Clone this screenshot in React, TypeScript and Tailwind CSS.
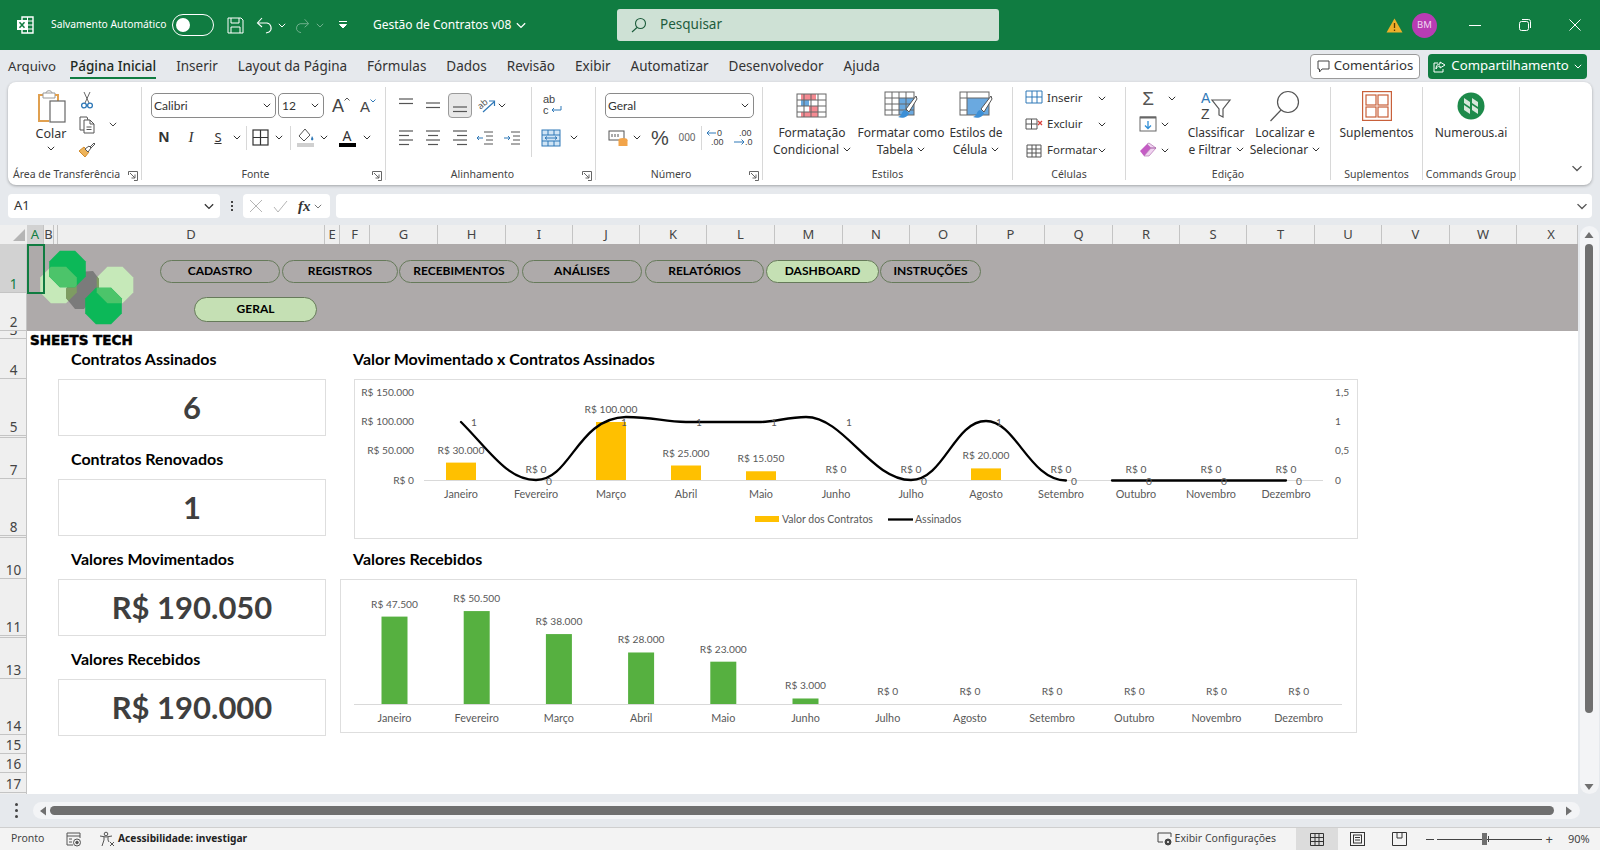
import React from "react";

const Chev = ({ className = "" }: { className?: string }) => (
  <svg width="8" height="5" viewBox="0 0 8 5" className={`shrink-0 ${className}`}>
    <path d="M.8.8 4 4 7.2.8" fill="none" stroke="currentColor" strokeWidth="1" />
  </svg>
);

const Launcher = () => (
  <svg width="10" height="10" viewBox="0 0 10 10" className="absolute right-[3px] top-[6px] text-[#666]">
    <path d="M.5 4V.5H9.5V9.5H6" fill="none" stroke="currentColor" />
    <path d="M2 2l5 5M7 3.5V7H3.5" fill="none" stroke="currentColor" />
  </svg>
);

function Group({ w, label, launcher, children, noBorder }: { w: string; label: string; launcher?: boolean; children: React.ReactNode; noBorder?: boolean }) {
  return (
    <div className={`${w} shrink-0 flex flex-col h-[93px] ${noBorder ? "" : "border-r border-[#d8d8d8]"}`}>
      <div className="h-[78px] flex">{children}</div>
      <div className={`relative h-[15px] pt-[2px] text-center text-[10.5px] leading-[15px] text-[#444] whitespace-nowrap ${launcher ? "pr-[16px]" : ""}`}>
        {label}
        {launcher && <Launcher />}
      </div>
    </div>
  );
}

const Combo = ({ w, text, className = "" }: { w: string; text: string; className?: string }) => (
  <div className={`${w} h-[25px] shrink-0 flex items-center justify-between pl-[2px] pr-[4px] border border-[#8a8a8a] rounded-[5px] font-['Lato',sans-serif] text-[12px] text-[#333] ${className}`}>
    <span>{text}</span>
    <Chev />
  </div>
);

const BigBtn = ({ w, icon, lines, chev }: { w: string; icon: React.ReactNode; lines: string[]; chev?: boolean }) => (
  <div className={`${w} shrink-0 flex flex-col items-center`}>
    <div className="h-[32px] mt-[3px] flex items-center justify-center">{icon}</div>
    <div className="mt-[2px] text-[12px] leading-[17px] text-center text-[#333] whitespace-nowrap">
      <div>{lines[0]}</div>
      {lines[1] && (
        <div className="flex items-center justify-center gap-[4px]">
          {lines[1]}
          {chev && <Chev />}
        </div>
      )}
    </div>
  </div>
);

const Lines = ({ rows, y = 0 }: { rows: [number, number][]; y?: number }) => (
  <svg width="20" height="20" viewBox="0 0 20 20">
    {rows.map(([a, b], i) => (
      <path key={i} d={`M${a} ${y + 4 + i * 4.5}H${b}`} stroke="#555" strokeWidth="1.2" />
    ))}
  </svg>
);

const Grid = ({ color = "#666" }: { color?: string }) => (
  <g stroke={color} strokeWidth="1" fill="none">
    <rect x="1" y="1" width="29" height="23" />
    <path d="M8 1v23M15 1v23M22 1v23M1 7h29M1 13h29M1 19h29" />
  </g>
);

const CondIcon = () => (
  <svg width="32" height="26" viewBox="0 0 32 26">
    <rect x="5" y="1" width="15" height="6" fill="#f58a92" />
    <rect x="5" y="7" width="8" height="6" fill="#6aa9e0" />
    <rect x="13" y="13" width="9" height="6" fill="#f58a92" />
    <rect x="5" y="19" width="17" height="5" fill="#f58a92" />
    <Grid />
  </svg>
);

const TableIcon = ({ full }: { full?: boolean }) => (
  <svg width="34" height="30" viewBox="0 0 34 30">
    <rect x={full ? 8 : 15} y="7" width={full ? 22 : 15} height={17} fill="#6aa9e0" />
    <g stroke="#666" fill="none">
      <rect x="1" y="1" width="29" height="23" />
      {full ? <path d="M8 1v23M1 7h29M1 19h7" /> : <path d="M8 1v23M15 1v23M22 1v23M1 7h29M1 13h29M1 19h29" />}
    </g>
    <path d="M32 5 22 18l3 3L33 8Z" fill="#fff" stroke="#555" />
    <path d="M21 19c-4 1-2 5-7 7 5 2 10 0 11-4Z" fill="#3c8fd6" />
  </svg>
);

const FontSizeBtn = ({ size, up }: { size: string; up: boolean }) => (
  <span className={`relative ${size} leading-none text-[#444] font-['Liberation_Sans',sans-serif]`}>
    A
    <svg width="6" height="4" viewBox="0 0 6 4" className="absolute -right-[6px] top-[1px]" fill="none" stroke={up ? "#555" : "#2f78b7"}>
      <path d={up ? "M.5 3.500 3 1l2.500 2.500" : "M.5.5 3 3 5.500.5"} />
    </svg>
  </span>
);

function Ribbon() {
  return (
    <div className="mx-2 h-[103px] bg-white rounded-[8px] shadow-[0_1px_3px_rgba(0,0,0,0.3)] flex py-[5px] text-[#333]">
      <Group w="w-[134px]" label="Área de Transferência" launcher>
        <div className="ml-[21px] w-[44px] flex flex-col items-center">
          <svg width="30" height="34" viewBox="0 0 30 34" className="mt-[3px] ml-[2px]">
            <path d="M11 5H2v26h10" fill="#fff" stroke="#e0a050" strokeWidth="2" />
            <path d="M6 3h12v5H6z" fill="#fff" stroke="#999" />
            <path d="M9 3c0-3 6-3 6 0" fill="none" stroke="#999" />
            <path d="M18 5h3v6" fill="none" stroke="#e0a050" strokeWidth="2" />
            <rect x="13" y="11" width="15" height="21" fill="#fff" stroke="#666" strokeWidth="1.2" />
          </svg>
          <span className="mt-[2px] text-[12.5px] leading-[16px]">Colar</span>
          <Chev className="mt-[4px]" />
        </div>
        <div className="ml-[4px] flex flex-col">
          <div className="h-[25px] w-5 flex items-center justify-center">
            <svg width="14" height="18" viewBox="0 0 14 18" fill="none">
              <path d="M4 1l5 11M10 1 5 12" stroke="#666" />
              <circle cx="4" cy="14.5" r="2.4" stroke="#2f78b7" strokeWidth="1.3" />
              <circle cx="10" cy="14.5" r="2.4" stroke="#2f78b7" strokeWidth="1.3" />
            </svg>
          </div>
          <div className="h-[25px] flex items-center">
            <div className="w-5 flex justify-center">
              <svg width="16" height="18" viewBox="0 0 16 18" fill="none" stroke="#555">
                <path d="M5 14H1V1h7l1 3" />
                <path d="M5 4h6l4 4v9H5zM11 4v4h4M7.5 11h5M7.5 13.5h5" />
              </svg>
            </div>
            <Chev className="ml-[12px] text-[#444]" />
          </div>
          <div className="h-[25px] w-5 flex items-center justify-center">
            <svg width="18" height="18" viewBox="0 0 18 18">
              <path d="M1 10l6 6 4-5-5-5Z" fill="#eeb45a" stroke="#d18a2b" />
              <path d="M7 8l4-3 2 2-3 4Z" fill="#fff" stroke="#555" />
              <path d="M12 6l4-4 1 1-4 4Z" fill="#fff" stroke="#555" />
            </svg>
          </div>
        </div>
      </Group>

      <Group w="w-[244px]" label="Fonte" launcher>
        <div className="flex flex-col">
          <div className="mt-[6px] flex items-center">
            <Combo w="w-[125px]" text="Calibri" className="ml-[9px]" />
            <Combo w="w-[46px]" text="12" className="ml-[2px] !pl-[3px]" />
            <span className="ml-[8px]"><FontSizeBtn up size="text-[18px]" /></span>
            <span className="ml-[16px]"><FontSizeBtn up={false} size="text-[15px]" /></span>
          </div>
          <div className="mt-[7px] h-[25px] flex items-center text-[#333]">
            <span className="ml-[12px] w-5 text-center font-['Liberation_Sans',sans-serif] font-bold text-[15px]">N</span>
            <span className="ml-[7px] w-5 text-center font-['Liberation_Serif',serif] italic text-[15px]">I</span>
            <span className="ml-[7px] w-5 text-center underline text-[13px]">S</span>
            <Chev className="ml-[5px]" />
            <span className="ml-[5px] w-px h-[24px] bg-[#d8d8d8]" />
            <svg width="17" height="17" viewBox="0 0 17 17" className="ml-[5px]" fill="none" stroke="#333" strokeWidth="1.2">
              <rect x="1" y="1" width="15" height="15" />
              <path d="M8.5 1v15M1 8.5h15" />
            </svg>
            <Chev className="ml-[6px]" />
            <span className="ml-[7px] w-px h-[24px] bg-[#d8d8d8]" />
            <svg width="18" height="20" viewBox="0 0 18 20" className="ml-[6px]">
              <path d="M8 1 2 8l5 5 6-6Z" fill="#fff" stroke="#555" />
              <path d="M15 8c1 2 2 3 1 4s-2 0-2-1Z" fill="#2f78b7" />
              <rect x="0" y="15" width="17" height="4" fill="#d0d0d0" />
            </svg>
            <Chev className="ml-[5px]" />
            <span className="ml-[10px] w-[18px] flex flex-col items-center leading-none">
              <span className="text-[14px] leading-[15px]">A</span>
              <span className="w-[17px] h-[4px] bg-black" />
            </span>
            <Chev className="ml-[7px]" />
          </div>
        </div>
      </Group>

      <Group w="w-[210px]" label="Alinhamento" launcher>
        <div className="w-[146px] shrink-0 flex flex-col border-r border-[#d8d8d8] mb-[8px]">
          <div className="mt-[6px] h-[25px] flex items-center">
            <span className="ml-[10px]"><Lines rows={[[3, 17], [3, 17]]} y={-1} /></span>
            <span className="ml-[7px]"><Lines rows={[[3, 17], [3, 17]]} y={3} /></span>
            <span className="ml-[5px] w-[24px] h-[25px] flex items-center justify-center bg-[#e8e8e8] border border-[#9a9a9a] rounded-[4px]"><Lines rows={[[3, 17], [3, 17]]} y={7} /></span>
            <svg width="20" height="20" viewBox="0 0 20 20" className="ml-[5px]" fill="none">
              <text x="1" y="11" fontSize="9" fill="#555" transform="rotate(-40 6 9)">ab</text>
              <path d="M6 16 17 6M12 5h5.5V10" stroke="#2f78b7" strokeWidth="1.2" />
            </svg>
            <Chev className="ml-[1px]" />
          </div>
          <div className="mt-[7px] h-[25px] flex items-center">
            <span className="ml-[10px]"><Lines rows={[[3, 17], [3, 13], [3, 17], [3, 13]]} y={-1} /></span>
            <span className="ml-[7px]"><Lines rows={[[3, 17], [5, 15], [3, 17], [5, 15]]} y={-1} /></span>
            <span className="ml-[7px]"><Lines rows={[[3, 17], [7, 17], [3, 17], [7, 17]]} y={-1} /></span>
            <svg width="20" height="20" viewBox="0 0 20 20" className="ml-[5px]" fill="none" stroke="#555">
              <path d="M9 4h9M11 8h7M11 12h7M9 16h9" /><path d="M8 10H2M4 8l-2 2 2 2" stroke="#2f78b7" />
            </svg>
            <svg width="20" height="20" viewBox="0 0 20 20" className="ml-[7px]" fill="none" stroke="#555">
              <path d="M9 4h9M11 8h7M11 12h7M9 16h9" /><path d="M2 10h6M6 8l2 2-2 2" stroke="#2f78b7" />
            </svg>
          </div>
        </div>
        <div className="flex flex-col">
          <div className="mt-[6px] h-[25px] flex items-center ml-[11px]">
            <span className="relative w-[20px] h-[24px] leading-[11px] text-[#444] text-[11px] font-['Liberation_Sans',sans-serif]">
              ab
              <br />c
              <svg width="13" height="10" viewBox="0 0 13 10" className="absolute left-[7px] top-[11px]" fill="none" stroke="#2f78b7"><path d="M11 1v4H2M4 3 2 5l2 2" /></svg>
            </span>
          </div>
          <div className="mt-[7px] h-[25px] flex items-center ml-[9px]">
            <svg width="20" height="18" viewBox="0 0 20 18" fill="#cfe4f5" stroke="#2f78b7">
              <rect x="1" y="1" width="18" height="16" />
              <path d="M1 6h18M1 12h18M7 1v5M13 1v5M7 12v5M13 12v5" fill="none" />
              <path d="M4 9h12M6 7.5 4 9l2 1.5M14 7.5 16 9l-2 1.5" fill="none" />
            </svg>
            <Chev className="ml-[9px]" />
          </div>
        </div>
      </Group>

      <Group w="w-[167px]" label="Número" launcher>
        <div className="flex flex-col">
          <Combo w="w-[149px]" text="Geral" className="ml-[9px] mt-[6px]" />
          <div className="mt-[7px] h-[25px] flex items-center">
            <svg width="20" height="18" viewBox="0 0 20 18" className="ml-[12px]">
              <rect x="1" y="2" width="15" height="9" fill="#fff" stroke="#555" />
              <path d="M4 5v3M7 5v3M10 5v3" stroke="#555" />
              <ellipse cx="15" cy="11" rx="4.5" ry="2" fill="#f2a44a" />
              <rect x="10.5" y="11" width="9" height="6" fill="#f2a44a" />
            </svg>
            <Chev className="ml-[5px]" />
            <span className="ml-[8px] w-[22px] text-center text-[20px] leading-none font-['Liberation_Sans',sans-serif] font-light text-[#444]">%</span>
            <span className="ml-[6px] w-[20px] text-center text-[10px] text-[#666]">000</span>
            <span className="ml-[4px] w-px h-[24px] bg-[#d8d8d8]" />
            <svg width="22" height="20" viewBox="0 0 22 20" className="ml-[3px] font-['Liberation_Sans',sans-serif]" fontSize="9">
              <text x="12" y="8" fill="#444">0</text><text x="6" y="17" fill="#444">.00</text>
              <path d="M11 5H2M4.5 2.5 2 5l2.5 2.5" fill="none" stroke="#2f78b7" />
            </svg>
            <svg width="22" height="20" viewBox="0 0 22 20" className="ml-[5px] font-['Liberation_Sans',sans-serif]" fontSize="9">
              <text x="7" y="8" fill="#444">.00</text><text x="13" y="17" fill="#444">.0</text>
              <path d="M2 14h10M9.5 11.500 12 14l-2.500 2.500" fill="none" stroke="#2f78b7" />
            </svg>
          </div>
        </div>
      </Group>

      <Group w="w-[250px]" label="Estilos">
        <div className="w-[5px]" />
        <BigBtn w="w-[88px]" icon={<CondIcon />} lines={["Formatação", "Condicional"]} chev />
        <BigBtn w="w-[90px]" icon={<TableIcon />} lines={["Formatar como", "Tabela"]} chev />
        <BigBtn w="w-[60px]" icon={<TableIcon full />} lines={["Estilos de", "Célula"]} chev />
      </Group>

      <Group w="w-[113px]" label="Células">
        <div className="w-full flex flex-col -mt-[2px] text-[11.5px]">
          {[
            ["Inserir", "M1 1h16v12H1zM7 1v12M12 1v12M1 7h16"],
            ["Excluir", "M1 3h11v10H1zM6.500 3v10M1 8h11"],
            ["Formatar", "M2 3h14v12H2zM7 3v12M11 3v12M2 7h14M2 11h14"],
          ].map(([t, d], i) => (
            <div key={t} className="h-[26px] flex items-center">
              <svg width="18" height="16" viewBox="0 0 18 16" className="ml-[12px] shrink-0" fill="none">
                <path d={d} stroke={i === 0 ? "#2f78b7" : "#555"} />
                {i === 1 && <path d="M13 5l4 4M17 5l-4 4" stroke="#d9403a" strokeWidth="1.300" />}
              </svg>
              <span className="ml-[4px]">{t}</span>
              <Chev className="ml-auto mr-[19px]" />
            </div>
          ))}
        </div>
      </Group>

      <Group w="w-[205px]" label="Edição">
        <div className="w-[60px] shrink-0 flex flex-col -mt-[2px]">
          <div className="h-[26px] flex items-center">
            <span className="ml-[13px] w-[18px] text-center text-[19px] leading-none font-['Liberation_Sans',sans-serif] text-[#555]">Σ</span>
            <Chev className="ml-[11px]" />
          </div>
          <div className="h-[26px] flex items-center">
            <svg width="18" height="16" viewBox="0 0 18 16" className="ml-[13px]" fill="none">
              <rect x="1" y="1" width="16" height="14" stroke="#666" />
              <path d="M1 1.500h16" stroke="#666" strokeWidth="2" />
              <path d="M9 5v7M6 9.500 9 12.500l3-3" stroke="#2f8ed6" strokeWidth="1.300" />
            </svg>
            <Chev className="ml-[4px]" />
          </div>
          <div className="h-[26px] flex items-center">
            <svg width="18" height="16" viewBox="0 0 18 16" className="ml-[13px]">
              <path d="M1 9 8 2l4 4-7 8Z" fill="#c45cc4" />
              <path d="M8 2l2-1 7 5-5 0Z M12 6l5 0-7 8-5 0Z" fill="#f0d4f0" stroke="#a55aa5" strokeWidth=".6" />
            </svg>
            <Chev className="ml-[4px]" />
          </div>
        </div>
        <BigBtn
          w="w-[60px]"
          icon={
            <svg width="32" height="30" viewBox="0 0 32 30" fill="none">
              <text x="1" y="12" fontSize="14" fill="#2f78b7" className="font-['Liberation_Sans',sans-serif]">A</text>
              <text x="1" y="28" fontSize="14" fill="#444" className="font-['Liberation_Sans',sans-serif]">Z</text>
              <path d="M12 9h18l-7 9v8l-4-2v-6Z" stroke="#555" strokeWidth="1.200" />
            </svg>
          }
          lines={["Classificar", "e Filtrar"]}
          chev
        />
        <BigBtn
          w="w-[78px]"
          icon={
            <svg width="32" height="32" viewBox="0 0 32 32" fill="none" stroke="#555" strokeWidth="1.200">
              <circle cx="19" cy="12" r="10.500" />
              <path d="M12 20 1.500 31" />
            </svg>
          }
          lines={["Localizar e", "Selecionar"]}
          chev
        />
      </Group>

      <Group w="w-[92px]" label="Suplementos">
        <BigBtn
          w="w-full"
          icon={
            <svg width="30" height="30" viewBox="0 0 30 30" fill="#fff" stroke="#c8603a" strokeWidth="1.200">
              <rect x=".6" y=".6" width="28.800" height="28.800" />
              <rect x="4" y="4" width="10" height="10" />
              <rect x="16" y="4" width="10" height="10" />
              <rect x="4" y="16" width="10" height="10" />
              <rect x="16" y="16" width="10" height="10" />
            </svg>
          }
          lines={["Suplementos"]}
        />
      </Group>

      <Group w="w-[97px]" label="Commands Group">
        <BigBtn
          w="w-full"
          icon={
            <svg width="28" height="28" viewBox="0 0 28 28">
              <circle cx="14" cy="14" r="13.500" fill="#1d8a4a" />
              <path d="M7 6l6 4v5L7 11ZM7 13l6 4v5l-6-4ZM15 6l6 4v5l-6-4ZM15 13l6 4v5l-6-4Z" fill="#d8e8dc" />
            </svg>
          }
          lines={["Numerous.ai"]}
        />
      </Group>

      <div className="flex-1 relative">
        <Chev className="absolute left-[53px] top-[79px] scale-[1.400] text-[#555]" />
      </div>
    </div>
  );
}

function TitleBar() {
  return (
    <div className="h-[50px] shrink-0 bg-[#107c41] text-white flex items-center">
      <div className="w-[617px] shrink-0 flex items-center">
        <svg width="18" height="18" viewBox="0 0 18 18" className="ml-[16px]">
          <path d="M6 1h11v16H6z" fill="none" stroke="#fff" strokeWidth="1.400" />
          <path d="M11.500 1v16M6 5h11M6 9h11M6 13h11" stroke="#fff" />
          <rect x="1" y="4" width="10" height="10" fill="#fff" />
          <path d="M3.500 6.200 8.500 11.800M8.500 6.200 3.500 11.800" stroke="#107c41" strokeWidth="1.500" />
        </svg>
        <span className="ml-[17px] text-[10.3px] whitespace-nowrap w-[104px]">Salvamento Automático</span>
        <div className="ml-[17px] w-[42px] h-[22px] rounded-full border border-white flex items-center pl-[3px]">
          <span className="w-[14px] h-[14px] rounded-full bg-white" />
        </div>
        <svg width="17" height="17" viewBox="0 0 17 17" className="ml-[13px]" fill="none" stroke="#fff">
          <path d="M1 1h13l2 2v13H1z" /><path d="M4 1v5h8V1M4 16v-6h9v6" />
        </svg>
        <svg width="19" height="18" viewBox="0 0 19 18" className="ml-[12px]" fill="none" stroke="#fff" strokeWidth="1.100">
          <path d="M2 7h9a5 5 0 0 1 2 9l-3 1" /><path d="M6 2 1.500 7 6 11" />
        </svg>
        <Chev className="ml-[3px]" />
        <svg width="17" height="17" viewBox="0 0 19 18" className="ml-[7px] opacity-40" fill="none" stroke="#fff" strokeWidth="1.100">
          <path d="M17 7H8a5 5 0 0 0-2 9l3 1" /><path d="M13 2l4.500 5L13 11" />
        </svg>
        <Chev className="ml-[6px] opacity-40" />
        <svg width="10" height="10" viewBox="0 0 10 10" className="ml-[14px]" fill="none" stroke="#fff">
          <path d="M1 1.500h8" /><path d="M1.500 4.500 5 8l3.500-3.500Z" fill="#fff" />
        </svg>
        <span className="ml-[25px] text-[12px] whitespace-nowrap">Gestão de Contratos v08</span>
        <Chev className="ml-[6px] scale-[1.300]" />
      </div>
      <div className="w-[382px] h-[32px] shrink-0 rounded-[3px] bg-[#cee1d5] flex items-center text-[#1d5c3c]">
        <svg width="16" height="16" viewBox="0 0 16 16" className="ml-[14px]" fill="none" stroke="#1d5c3c" strokeWidth="1.100">
          <circle cx="9.500" cy="6.500" r="5" /><path d="M6 10.500 1 15" />
        </svg>
        <span className="ml-[13px] text-[13.5px] -mt-[1px]">Pesquisar</span>
      </div>
      <div className="flex-1 flex items-center">
        <svg width="17" height="15" viewBox="0 0 17 15" className="ml-[387px]">
          <path d="M8.500.5 16.500 14.500H.5Z" fill="#eeb02a" />
          <path d="M8.500 5v5M8.500 11.500v1.500" stroke="#5a3a00" strokeWidth="1.300" />
        </svg>
        <span className="ml-[9px] w-[25px] h-[25px] rounded-full bg-[#b83cb3] flex items-center justify-center text-[9.5px] text-[#f0d8f0]">BM</span>
        <span className="ml-[32px] w-[12px] h-px bg-white" />
        <svg width="12" height="12" viewBox="0 0 12 12" className="ml-[38px]" fill="none" stroke="#fff">
          <rect x=".5" y="2.500" width="9" height="9" rx="2" /><path d="M3 .5h6.500a2 2 0 0 1 2 2V9" />
        </svg>
        <svg width="12" height="12" viewBox="0 0 12 12" className="ml-[38px]" fill="none" stroke="#fff">
          <path d="M.5.5l11 11M11.500.5l-11 11" />
        </svg>
      </div>
    </div>
  );
}

function TabRow() {
  const tabs = ["Página Inicial", "Inserir", "Layout da Página", "Fórmulas", "Dados", "Revisão", "Exibir", "Automatizar", "Desenvolvedor", "Ajuda"];
  return (
    <div className="h-[32px] shrink-0 flex items-center pl-[8px] text-[13.2px] text-[#333]">
      <div className="flex flex-1 h-full text-[13.5px]">
        <div className="w-[62px] flex items-center pt-[1px] text-[13.2px]">Arquivo</div>
        <div className="flex gap-[20px]">
          {tabs.map((t) => (
            <div key={t} className={`relative flex items-center pt-[1px] whitespace-nowrap ${t === "Página Inicial" ? "font-medium text-[#1d2b24]" : ""}`}>
              {t}
              {t === "Página Inicial" && <span className="absolute left-0 right-0 bottom-[3px] h-[2px] bg-[#107c41]" />}
            </div>
          ))}
        </div>
      </div>
      <div className="w-[110px] h-[25px] flex items-center justify-center gap-[4px] bg-white border border-[#9a9a9a] rounded-[4px]">
        <svg width="13" height="13" viewBox="0 0 13 13" fill="none" stroke="#444"><path d="M1 1h11v8H5L2.500 12V9H1z" /></svg>
        Comentários
      </div>
      <div className="ml-[8px] mr-[13px] w-[159px] h-[25px] flex items-center justify-center gap-[5px] bg-[#107c41] text-white rounded-[4px]">
        <svg width="13" height="13" viewBox="0 0 13 13" fill="none" stroke="#fff"><path d="M5 3H1v9h9V9M7 2l5 3-5 3V6C5 6 4 7 3 9c0-3 1-5 4-5Z" /></svg>
        <span className="whitespace-nowrap">Compartilhamento</span>
        <Chev />
      </div>
    </div>
  );
}

function FormulaBar() {
  return (
    <div className="mt-[9px] mx-2 h-[24px] shrink-0 flex items-center text-[#333]">
      <div className="w-[212px] h-full bg-white rounded-[4px] flex items-center justify-between pl-[6px] pr-[7px] text-[13px]">
        A1
        <Chev className="scale-[1.300]" />
      </div>
      <div className="w-[23px] flex flex-col items-center gap-[2px]">
        <span className="w-[2px] h-[2px] bg-[#444]" /><span className="w-[2px] h-[2px] bg-[#444]" /><span className="w-[2px] h-[2px] bg-[#444]" />
      </div>
      <div className="w-[87px] h-full bg-white rounded-[4px] flex items-center">
        <svg width="14" height="14" viewBox="0 0 14 14" className="ml-[6px]" stroke="#b5b5b5" fill="none"><path d="M1 1l12 12M13 1 1 13" /></svg>
        <svg width="15" height="13" viewBox="0 0 15 13" className="ml-[10px]" stroke="#b5b5b5" fill="none"><path d="M1 7l4 5L14 1" /></svg>
        <span className="ml-[10px] font-['Liberation_Serif',serif] italic font-semibold text-[15px] text-[#333]">fx</span>
        <Chev className="ml-[3px] text-[#777]" />
      </div>
      <div className="ml-[6px] flex-1 h-full bg-white rounded-[4px] flex items-center justify-end pr-[6px]">
        <Chev className="scale-[1.400] text-[#555]" />
      </div>
    </div>
  );
}

const cols: [string, string][] = [
  ["A", "w-[17px]"], ["B", "w-[10px]"], ["", "w-[4px]"], ["D", "w-[267px]"], ["E", "w-[15px]"], ["F", "w-[30px]"],
  ["G", "w-[68px]"], ["H", "w-[68px]"], ["I", "w-[67px]"], ["J", "w-[67px]"], ["K", "w-[67px]"], ["L", "w-[68px]"],
  ["M", "w-[68px]"], ["N", "w-[67px]"], ["O", "w-[67px]"], ["P", "w-[68px]"], ["Q", "w-[68px]"], ["R", "w-[67px]"],
  ["S", "w-[67px]"], ["T", "w-[68px]"], ["U", "w-[67px]"], ["V", "w-[68px]"], ["W", "w-[67px]"], ["X", "flex-1 pl-[8px]"],
];
const rows: [string, string][] = [
  ["1", "h-[49px]"], ["2", "h-[38px]"], ["3", "h-[8px]"], ["4", "h-[40px]"], ["5", "h-[57px]"], ["", "h-[2px]"],
  ["7", "h-[41px]"], ["8", "h-[57px]"], ["", "h-[2px]"], ["10", "h-[41px]"], ["11", "h-[57px]"], ["", "h-[2px]"],
  ["13", "h-[41px]"], ["14", "h-[56px]"], ["15", "h-[19px]"], ["16", "h-[19px]"], ["17", "h-[20px]"],
];

const octagon = (cx: number, cy: number, r = 19.800) =>
  Array.from({ length: 8 }, (_, i) => {
    const a = ((i + 0.5) * Math.PI) / 4;
    return `${(cx + r * Math.cos(a)).toFixed(1)},${(cy + r * Math.sin(a)).toFixed(1)}`;
  }).join(" ");

function Logo() {
  const d1 = octagon(67.5, 269);
  const d2 = octagon(103.5, 306);
  const grey = "78,272 93,271 99,279 99,289 84,309 75,309 66,298 66,289";
  return (
    <svg viewBox="37 244 100 85" className="absolute left-[10px] top-0 w-[100px] h-[85px]">
      <defs>
        <clipPath id="c1"><polygon points={d1} /></clipPath>
        <clipPath id="c2"><polygon points={d2} /></clipPath>
        <clipPath id="c3"><polygon points={grey} /></clipPath>
      </defs>
      <polygon points={octagon(58.5, 285)} fill="#c6e9b9" />
      <polygon points={octagon(115, 285)} fill="#c6e9b9" />
      <polygon points={grey} fill="#7b7b7b" />
      <g clipPath="url(#c3)">
        <polygon points={octagon(58.5, 285)} fill="#7e9c62" />
        <polygon points={octagon(115, 285)} fill="#7e9c62" />
      </g>
      <polygon points={d1} fill="#0cb858" />
      <polygon points={d2} fill="#0cb858" />
      <g clipPath="url(#c1)"><polygon points={octagon(58.5, 285)} fill="#4cc46a" /></g>
      <g clipPath="url(#c2)"><polygon points={octagon(115, 285)} fill="#4cc46a" /></g>
    </svg>
  );
}

const Pill = ({ w, label, active, ml }: { w: string; label: string; active?: boolean; ml: string }) => (
  <div className={`${w} ${ml} shrink-0 flex items-center justify-center pb-[1px] rounded-full border border-[#667a5a] font-['Lato',sans-serif] font-bold text-[12px] text-black ${active ? "bg-[#c5e0b4]" : ""}`}>
    {label}
  </div>
);

function Band() {
  return (
    <div className="h-[87px] bg-[#aeaaaa] pt-[16px]">
      <div className="flex h-[23px] pl-[133px]">
        <Pill w="w-[120px]" ml="ml-0" label="CADASTRO" />
        <Pill w="w-[116px]" ml="ml-[2px]" label="REGISTROS" />
        <Pill w="w-[120px]" ml="ml-[1px]" label="RECEBIMENTOS" />
        <Pill w="w-[120px]" ml="ml-[3px]" label="ANÁLISES" />
        <Pill w="w-[119px]" ml="ml-[3px]" label="RELATÓRIOS" />
        <Pill w="w-[113px]" ml="ml-[2px]" label="DASHBOARD" active />
        <Pill w="w-[101px]" ml="ml-[1px]" label="INSTRUÇÕES" />
      </div>
      <div className="mt-[14px] ml-[167px]">
        <div className="flex h-[25px]">
          <Pill w="w-[123px]" ml="ml-0" label="GERAL" active />
        </div>
      </div>
    </div>
  );
}

const kpis = [
  ["Contratos Assinados", "6"],
  ["Contratos Renovados", "1"],
  ["Valores Movimentados", "R$ 190.050"],
  ["Valores Recebidos", "R$ 190.000"],
];

const months = ["Janeiro", "Fevereiro", "Março", "Abril", "Maio", "Junho", "Julho", "Agosto", "Setembro", "Outubro", "Novembro", "Dezembro"];

function ChartOne() {
  const vals = [30000, 0, 100000, 25000, 15050, 0, 0, 20000, 0, 0, 0, 0];
  const lines = [1, 0, 1, 1, 1, 1, 0, 1, 0, 0, 0, 0];
  const fmt = (v: number) => "R$ " + v.toLocaleString("de-DE");
  const cx = (i: number) => 461 + i * 75;
  return (
    <svg viewBox="355 380 1002 158" className="w-full h-full font-['Lato',sans-serif]" fontSize="10.2" fill="#595959">
      {[["R$ 150.000", 392], ["R$ 100.000", 421], ["R$ 50.000", 450], ["R$ 0", 480]].map(([t, y]) => (
        <text key={t} x="414" y={(y as number) + 3.500} textAnchor="end">{t}</text>
      ))}
      {[["1,5", 392], ["1", 421], ["0,5", 450], ["0", 480]].map(([t, y]) => (
        <text key={t} x="1335" y={(y as number) + 3.500}>{t}</text>
      ))}
      <path d="M424 480.500H1323" stroke="#d9d9d9" />
      {vals.map((v, i) => {
        const h = v * 0.00058;
        return (
          <g key={i}>
            {v > 0 && <rect x={cx(i) - 15} y={480 - h} width="30" height={h} fill="#ffc000" />}
            <text x={cx(i)} y={v ? 480 - h - 9 : 472.500} textAnchor="middle">{fmt(v)}</text>
            <text x={cx(i)} y="497.500" fontSize="10.800" textAnchor="middle">{months[i]}</text>
          </g>
        );
      })}
      <path
        d="M461 422C489 450 507 480 536 480C571 480 577 418 626 417C654 417 664 422 686 422C709 422 739 422 761 422C774 422 789 417 806 417C844 417 871 480 911 480C944 480 954 421 986 421C1016 421 1029 480 1066 480.500M1112 480.500C1134 480 1189 480.500 1286 480.500"
        fill="none"
        stroke="#000"
        strokeWidth="2.300"
        strokeLinecap="round"
      />
      {lines.map((v, i) => (
        <text key={i} x={cx(i) + 13} y={v ? 425.500 : 484.500} textAnchor="middle">{v}</text>
      ))}
      <rect x="755" y="516" width="24" height="6" fill="#ffc000" />
      <text x="782" y="522.500" fontSize="10.500">Valor dos Contratos</text>
      <path d="M888 519.500H913" stroke="#000" strokeWidth="2.300" />
      <text x="915" y="522.500" fontSize="10.500">Assinados</text>
    </svg>
  );
}

function ChartTwo() {
  const vals = [47500, 50500, 38000, 28000, 23000, 3000, 0, 0, 0, 0, 0, 0];
  const cx = (i: number) => 394.500 + i * 82.200;
  return (
    <svg viewBox="341 580 1015 152" className="w-full h-full font-['Lato',sans-serif]" fontSize="10.2" fill="#595959">
      <path d="M354 704.500H1342" stroke="#d9d9d9" />
      {vals.map((v, i) => {
        const h = v * 0.00184;
        return (
          <g key={i}>
            {v > 0 && <rect x={cx(i) - 13} y={704 - h} width="26" height={h} fill="#56b040" />}
            <text x={cx(i)} y={704 - h - 9} textAnchor="middle">{"R$ " + v.toLocaleString("de-DE")}</text>
            <text x={cx(i)} y="721.500" fontSize="10.800" textAnchor="middle">{months[i]}</text>
          </g>
        );
      })}
    </svg>
  );
}

function Sheet() {
  return (
    <div className="mt-[7px] h-[569px] shrink-0 flex">
      <div className="flex-1 flex flex-col min-w-0">
        <div className="h-[19px] flex bg-[#efefef] text-[13px] text-[#444]">
          <div className="w-[27px] shrink-0 flex items-end justify-end pr-[2px] pb-[3px]">
            <svg width="12" height="12" viewBox="0 0 12 12"><path d="M12 0V12H0Z" fill="#b5b5b5" /></svg>
          </div>
          {cols.map(([c, w], i) => (
            <div key={i} className={`${w} ${c === "X" ? "" : "shrink-0"} flex items-center justify-center border-r border-[#c4c4c4] overflow-hidden ${c === "A" ? "bg-[#d2d2d2] text-[#107c41]" : ""}`}>
              {c}
            </div>
          ))}
        </div>
        <div className="flex-1 flex min-h-0">
          <div className="w-[27px] shrink-0 flex flex-col bg-[#efefef] text-[13.5px] text-[#444]">
            {rows.map(([r, h], i) => (
              <div key={i} className={`${h} shrink-0 overflow-hidden flex items-end justify-center border-b border-[#c4c4c4] ${r === "1" ? "bg-[#d2d2d2] text-[#107c41]" : ""}`}>
                <span className="leading-[15px]">{r}</span>
              </div>
            ))}
          </div>
          <div className="relative flex-1 bg-white border-l border-[#c4c4c4] -ml-px overflow-hidden">
            <Band />
            <Logo />
            <div className="absolute left-0 top-0 w-[18px] h-[50px] border-2 border-[#107c41]" />
            <div className="absolute left-[3px] top-[87px] font-['DejaVu_Sans',sans-serif] font-bold text-[13.500px] leading-[18px] text-black whitespace-nowrap [-webkit-text-stroke:0.5px_black]">
              SHEETS TECH
            </div>
            <div className="flex">
              <div className="ml-[31px] w-[268px] shrink-0 pt-[5px] font-['Lato',sans-serif]">
                {kpis.map(([t, v]) => (
                  <div key={t} className="h-[100px]">
                    <div className="h-[43px] pt-[3px] pl-[13px] flex items-center font-bold text-[16px] text-black">{t}</div>
                    <div className="h-[57px] border border-[#dedede] flex items-center justify-center font-bold text-[31px] text-[#3f3f3f]">{v}</div>
                  </div>
                ))}
              </div>
              <div className="ml-[14px] flex flex-col font-['Lato',sans-serif]">
                <div className="h-[48px] pt-[8px] ml-[13px] flex items-center font-bold text-[16px] text-black">Valor Movimentado x Contratos Assinados</div>
                <div className="ml-[14px] w-[1004px] h-[160px] border border-[#dedede]"><ChartOne /></div>
                <div className="h-[40px] ml-[13px] flex items-center font-bold text-[16px] text-black">Valores Recebidos</div>
                <div className="w-[1017px] h-[154px] border border-[#dedede]"><ChartTwo /></div>
              </div>
            </div>
          </div>
        </div>
      </div>
      <div className="w-[22px] shrink-0 relative flex flex-col items-center">
        <div className="mt-[1px] w-[19px] flex-1 bg-[#f3f4f6] rounded-full flex flex-col items-center">
          <svg width="10" height="8" viewBox="0 0 10 8" className="mt-[5px]"><path d="M5 1 9.500 7H.5Z" fill="#707070" /></svg>
          <span className="mt-[5px] w-[8px] h-[469px] rounded-full bg-[#6f6f6f]" />
          <svg width="10" height="8" viewBox="0 0 10 8" className="mt-auto mb-[3px]"><path d="M5 7 9.500 1H.5Z" fill="#707070" /></svg>
        </div>
      </div>
    </div>
  );
}

function HScroll() {
  return (
    <div className="h-[33px] shrink-0 flex items-center">
      <div className="w-[33px] shrink-0 flex flex-col items-center gap-[3px]">
        <span className="w-[3px] h-[3px] rounded-full bg-[#444]" /><span className="w-[3px] h-[3px] rounded-full bg-[#444]" /><span className="w-[3px] h-[3px] rounded-full bg-[#444]" />
      </div>
      <div className="w-[547px] flex-1 mr-[20px] h-[17px] bg-[#f3f4f6] rounded-full flex items-center">
        <svg width="8" height="10" viewBox="0 0 8 10" className="ml-[6px]"><path d="M1 5 7 .5V9.500Z" fill="#707070" /></svg>
        <span className="ml-[3px] flex-1 h-[9px] rounded-full bg-[#6f6f6f]" />
        <svg width="8" height="10" viewBox="0 0 8 10" className="ml-[11px] mr-[7px]"><path d="M7 5 1 .5V9.500Z" fill="#707070" /></svg>
      </div>
    </div>
  );
}

function Status() {
  return (
    <div className="h-[23px] shrink-0 border-t border-[#cfcfcf] bg-[#f3f3f3] flex items-center text-[10.5px] text-[#444]">
      <span className="ml-[11px] w-[32px]">Pronto</span>
      <svg width="15" height="15" viewBox="0 0 15 15" className="ml-[23px]" fill="none" stroke="#555">
        <path d="M1 1h13v5M1 1v12h6M1 4h13M3 7h3M3 10h3" /><circle cx="11" cy="10.500" r="3.500" /><circle cx="11" cy="10.500" r="1.300" fill="#555" />
      </svg>
      <svg width="16" height="16" viewBox="0 0 16 16" className="ml-[18px]" fill="none" stroke="#555">
        <circle cx="7" cy="3" r="1.800" /><path d="M1 5l6 1 6-1M5 6l0 3-2 6M9 6v3l1 2M11 11l4 4M15 11l-4 4" />
      </svg>
      <span className="ml-[3px] font-bold whitespace-nowrap text-[10.2px] text-[#222]">Acessibilidade: investigar</span>
      <div className="flex-1" />
      <svg width="16" height="15" viewBox="0 0 16 15" fill="none" stroke="#444">
        <path d="M6 10H1V1h13v4" /><circle cx="11" cy="10" r="3" fill="#444" /><circle cx="11" cy="10" r="1" fill="#fff" stroke="none" />
      </svg>
      <span className="ml-[2px] w-[100px] whitespace-nowrap">Exibir Configurações</span>
      <div className="ml-[21px] w-[42px] h-full bg-[#dcdcdc] flex items-center justify-center">
        <svg width="14" height="13" viewBox="0 0 14 13" fill="none" stroke="#333"><path d="M.5.5h13v12H.5zM5 .5v12M9 .5v12M.5 4.500h13M.5 8.500h13" /></svg>
      </div>
      <svg width="15" height="14" viewBox="0 0 15 14" className="ml-[12px]" fill="none" stroke="#333"><rect x=".5" y=".5" width="14" height="13" /><rect x="3.500" y="3" width="8" height="8" /><path d="M5 5.500h5M5 8h5" /></svg>
      <svg width="15" height="14" viewBox="0 0 15 14" className="ml-[27px]" fill="none" stroke="#333"><path d="M.5.5h14v13H.5zM5 .5v5.500h5V.5" /></svg>
      <span className="ml-[19px] w-[8px] h-px bg-[#444]" />
      <div className="relative ml-[3px] w-[105px] h-px bg-[#444]">
        <span className="absolute left-[45px] -top-[6px] w-[5px] h-[12px] bg-[#6f6f6f]" />
        <span className="absolute left-[51px] -top-[3px] w-px h-[6px] bg-[#444]" />
      </div>
      <span className="ml-[4px] text-[13px] leading-none">+</span>
      <span className="ml-[15px] mr-[10px] w-[22px] text-[11px]">90%</span>
    </div>
  );
}

export default function App() {
  return (
    <div className="w-[1600px] h-[850px] overflow-hidden flex flex-col bg-[#e6e9ed] font-['Noto_Sans',sans-serif]">
      <TitleBar />
      <TabRow />
      <Ribbon />
      <FormulaBar />
      <Sheet />
      <HScroll />
      <Status />
    </div>
  );
}
